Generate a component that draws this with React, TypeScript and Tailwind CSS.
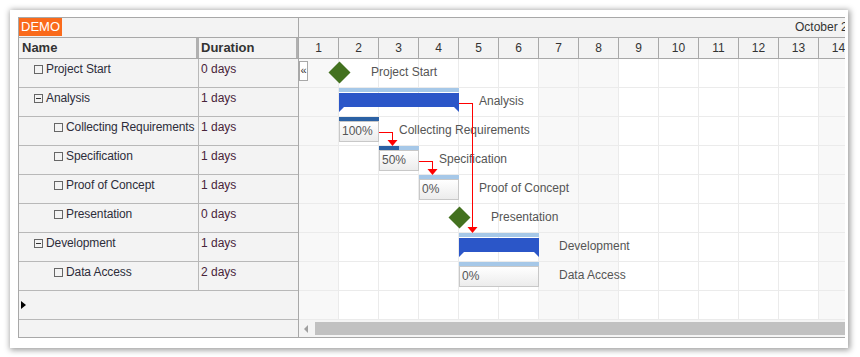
import React from 'react';

const ROW = 29;
const COL = 40;

interface Row {
  name: string;
  duration: string;
  level: number;
  group?: boolean;
}

const rows: Row[] = [
  { name: 'Project Start', duration: '0 days', level: 1 },
  { name: 'Analysis', duration: '1 days', level: 1, group: true },
  { name: 'Collecting Requirements', duration: '1 days', level: 2 },
  { name: 'Specification', duration: '1 days', level: 2 },
  { name: 'Proof of Concept', duration: '1 days', level: 2 },
  { name: 'Presentation', duration: '0 days', level: 2 },
  { name: 'Development', duration: '1 days', level: 1, group: true },
  { name: 'Data Access', duration: '2 days', level: 2 },
];

const days = Array.from({ length: 14 }, (_, i) => i + 1);
const weekend = [1, 7, 8, 14];

// bars on the timeline (x in px from the first day, row index)
const tasks = [
  { row: 2, x: COL, w: COL, pct: 100 },
  { row: 3, x: COL * 2, w: COL, pct: 50 },
  { row: 4, x: COL * 3, w: COL, pct: 0 },
  { row: 7, x: COL * 4, w: COL * 2, pct: 0 },
];
const summaries = [
  { row: 1, x: COL, w: COL * 3 },
  { row: 6, x: COL * 4, w: COL * 2 },
];
const milestones = [
  { row: 0, x: COL },
  { row: 5, x: COL * 4 },
];
const labels = [
  { row: 0, x: 72, text: 'Project Start' },
  { row: 1, x: 180, text: 'Analysis' },
  { row: 2, x: 100, text: 'Collecting Requirements' },
  { row: 3, x: 140, text: 'Specification' },
  { row: 4, x: 180, text: 'Proof of Concept' },
  { row: 5, x: 192, text: 'Presentation' },
  { row: 6, x: 260, text: 'Development' },
  { row: 7, x: 260, text: 'Data Access' },
];

function TreeIcon({ group }: { group?: boolean }) {
  return (
    <span className="relative inline-block w-[9px] h-[9px] border border-[#666] mr-[3px] shrink-0 mt-[4px]">
      {group && <span className="absolute left-[1px] right-[1px] top-[3px] h-px bg-[#333]" />}
    </span>
  );
}

function LeftPanel() {
  return (
    <div className="w-[280px] shrink-0 border-r border-[#a8a8a8] bg-[#f3f3f3] flex flex-col">
      <div className="h-[20px] border-b border-[#a8a8a8] flex items-start">
        <span className="bg-[#fa6a1b] text-white text-[13px] leading-[18px] px-[2px] h-[18px]">DEMO</span>
      </div>
      <div className="h-[21px] border-b border-[#a8a8a8] flex font-bold text-[13px] text-[#333]">
        <div className="w-[180px] border-r-[3px] border-[#b0b0b0] pl-[3px] leading-[20px]">Name</div>
        <div className="flex-1 pl-[2px] leading-[20px] border-r-2 border-[#b0b0b0]">Duration</div>
      </div>
      {rows.map((r) => (
        <div key={r.name} className="h-[29px] border-b border-[#b8b8b8] flex text-[12px]">
          <div
            className={`w-[180px] border-r border-[#b8b8b8] flex items-start pt-[2px] text-[#2d2d3a] whitespace-nowrap tracking-[-0.1px] ${
              r.level === 1 ? 'pl-[15px]' : 'pl-[35px]'
            }`}
          >
            <TreeIcon group={r.group} />
            <span className="leading-[16px]">{r.name}</span>
          </div>
          <div className="flex-1 pl-[2px] pt-[2px] leading-[16px] text-[#48243a]">{r.duration}</div>
        </div>
      ))}
      <div className="h-[29px] border-b border-[#b8b8b8] flex items-center pl-[2px]">
        <span className="w-0 h-0 border-y-[4px] border-y-transparent border-l-[5px] border-l-black" />
      </div>
      <div className="flex-1" />
    </div>
  );
}

function Timeline() {
  const height = rows.length * ROW + ROW;
  return (
    <div className="relative" style={{ height }}>
      {[...rows, null].map((_, i) => (
        <div key={i} className="h-[29px] flex border-b border-[#ebebeb]">
          {days.map((d) => (
            <div
              key={d}
              className={`w-[40px] shrink-0 border-r border-[#ebebeb] ${weekend.includes(d) ? 'bg-[#f8f8f8]' : 'bg-white'}`}
            />
          ))}
        </div>
      ))}

      <div className="absolute left-0 top-[2px] w-[9px] h-[20px] bg-white border border-[#a8a8a8] text-[11px] leading-[16px] text-[#333] flex justify-center">
        «
      </div>

      {summaries.map((s) => (
        <div key={s.row} className="absolute" style={{ left: s.x, top: s.row * ROW, width: s.w }}>
          <div className="h-[4px] bg-[#a6c8e8]" />
          <svg width={s.w} height={20} className="block mt-[1px]">
            <polygon points={`0,0 ${s.w},0 ${s.w},19 ${s.w - 5},14 5,14 0,19`} fill="#2b56c8" />
          </svg>
        </div>
      ))}

      {tasks.map((t) => (
        <div key={t.row} className="absolute" style={{ left: t.x, top: t.row * ROW, width: t.w }}>
          <div className="h-[4px] bg-[#a6c8e8]">
            <div className="h-full bg-[#2b61a4]" style={{ width: `${t.pct}%` }} />
          </div>
          <div className="h-[21px] border border-[#c8c8c8] bg-gradient-to-b from-white to-[#ececec] text-[12px] leading-[19px] text-[#555] pl-[2px]">
            {t.pct}%
          </div>
        </div>
      ))}

      {labels.map((l) => (
        <div
          key={l.text}
          className="absolute text-[12px] leading-[16px] text-[#555] whitespace-nowrap"
          style={{ left: l.x, top: l.row * ROW + 5 }}
        >
          {l.text}
        </div>
      ))}

      <svg className="absolute left-0 top-0 pointer-events-none" width={560} height={height} shapeRendering="crispEdges">
        {milestones.map((m) => {
          const cx = m.x + 0.5;
          const cy = m.row * ROW + 13.5;
          return (
            <polygon
              key={m.row}
              points={`${cx},${cy - 11} ${cx + 11},${cy} ${cx},${cy + 11} ${cx - 11},${cy}`}
              fill="#43711f"
              shapeRendering="geometricPrecision"
            />
          );
        })}
        <g stroke="#ff0000" fill="none">
          <polyline points="80,73.5 93.5,73.5 93.5,82" />
          <polyline points="120,102.5 133.5,102.5 133.5,111" />
          <polyline points="160,44.5 173.5,44.5 173.5,168" />
        </g>
        <g fill="#ff0000" shapeRendering="geometricPrecision">
          <polygon points="88.5,81 98.5,81 93.5,87" />
          <polygon points="128.5,110 138.5,110 133.5,116" />
          <polygon points="168.5,168 178.5,168 173.5,174" />
        </g>
      </svg>
    </div>
  );
}

function RightPanel() {
  return (
    <div className="flex-1 min-w-0 overflow-hidden flex flex-col">
      <div className="h-[20px] border-b border-[#a8a8a8] bg-[#f3f3f3] text-[12px] leading-[19px] text-[#333] pl-[496px] whitespace-nowrap">
        October 2017
      </div>
      <div className="h-[21px] border-b border-[#a8a8a8] bg-[#f3f3f3] flex">
        {days.map((d) => (
          <div
            key={d}
            className="w-[40px] shrink-0 border-r border-[#a8a8a8] text-center text-[12px] leading-[20px] text-[#333]"
          >
            {d}
          </div>
        ))}
      </div>
      <Timeline />
      <div className="flex-1 bg-[#f4f4f4] flex items-center">
        <span className="ml-[5px] mr-[7px] w-0 h-0 border-y-[4px] border-y-transparent border-r-[4px] border-r-[#a0a0a0]" />
        <div className="flex-1 h-[13px] bg-[#c1c1c1]" />
      </div>
    </div>
  );
}

export default function App() {
  return (
    <div
      className="w-[860px] h-[357px] bg-white pt-[10px] pl-[10px]"
      style={{ fontFamily: '"Liberation Sans", Arial, sans-serif' }}
    >
      <div className="w-[838px] h-[338px] bg-white shadow-[1px_1px_6px_1px_rgba(0,0,0,0.4)] pt-[7px] pl-[8px]">
        <div className="flex w-[827px] h-[321px] border-t border-l border-b border-[#a8a8a8] overflow-hidden">
          <LeftPanel />
          <RightPanel />
        </div>
      </div>
    </div>
  );
}
